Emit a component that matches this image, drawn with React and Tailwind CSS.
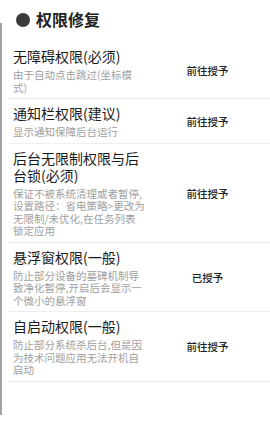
const items = [
  {
    title: "无障碍权限(必须)",
    desc: "由于自动点击跳过(坐标模\n式)",
    action: "前往授予",
  },
  {
    title: "通知栏权限(建议)",
    desc: "显示通知保障后台运行",
    action: "前往授予",
  },
  {
    title: "后台无限制权限与后\n台锁(必须)",
    desc: "保证不被系统清理或者暂停,\n设置路径：省电策略>更改为\n无限制/未优化,在任务列表\n锁定应用",
    action: "前往授予",
  },
  {
    title: "悬浮窗权限(一般)",
    desc: "防止部分设备的墓碑机制导\n致净化暂停,开启后会显示一\n个微小的悬浮窗",
    action: "已授予",
  },
  {
    title: "自启动权限(一般)",
    desc: "防止部分系统杀后台,但是因\n为技术问题应用无法开机自\n启动",
    action: "前往授予",
  },
];

const App = () => {
  return (
    <div
      className="flex w-[270px] h-[426px] bg-white overflow-hidden"
      style={{ fontFamily: '"Noto Sans CJK SC", "Noto Sans", sans-serif' }}
    >
      {/* left edge strip */}
      <div className="w-[2px] shrink-0 mt-[23px] h-[392px] bg-[#a2a2a2]" />

      <div className="flex-1">
        {/* Header */}
        <div className="h-[42px] flex items-start pt-[9px] pl-[14px] gap-[6px]">
          <span className="mt-[4px] w-[14px] h-[14px] rounded-full bg-[#3a3a3a]" />
          <h1 className="text-[16px] leading-[20px] font-bold text-[#222]">权限修复</h1>
        </div>

        <div className="ml-[6px]">
          {items.map((item, i) => (
            <div
              key={i}
              className="flex items-center border-b border-[#eeeeee] pl-[5px] pt-[6px] pb-[4px]"
            >
              <div className="w-[132px] shrink-0">
                <div className="text-[14px] leading-[17px] text-[#1a1a1a] whitespace-pre-line">
                  {item.title}
                </div>
                <div className="mt-[4px] text-[10.5px] leading-[12.5px] text-[#a0a0a0] whitespace-pre">
                  {item.desc}
                </div>
              </div>
              <div className="flex-1 text-center text-[10.5px] font-medium text-[#222]">
                {item.action}
              </div>
            </div>
          ))}
        </div>
      </div>
    </div>
  );
};

export default App;
